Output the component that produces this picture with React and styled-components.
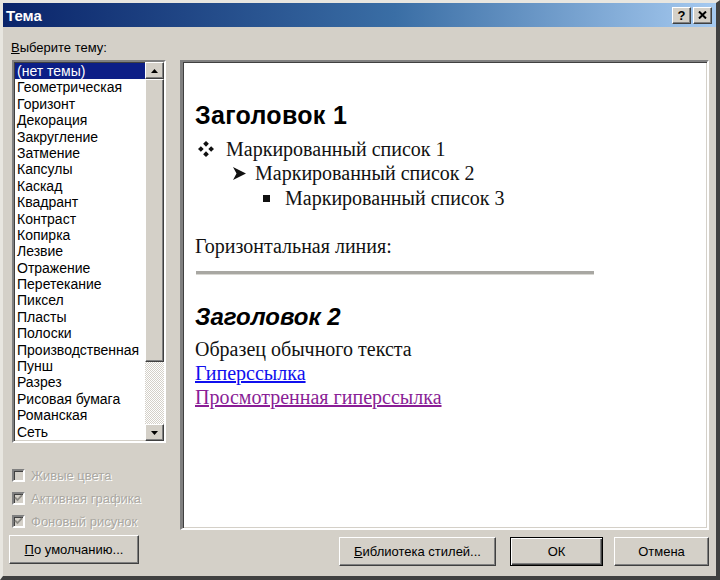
import React from 'react'
import styled, { createGlobalStyle } from 'styled-components'

const GlobalStyle = createGlobalStyle`
  html, body {
    margin: 0;
    padding: 0;
    background: #d4d0c8;
  }
  body {
    font-family: "Liberation Sans", Arial, sans-serif;
  }
`

const raised = `
  border-style: solid;
  border-width: 1px;
  border-color: #ffffff #404040 #404040 #ffffff;
  box-shadow: inset -1px -1px 0 #808080, inset 1px 1px 0 #d4d0c8;
`

const sunken = `
  border-style: solid;
  border-width: 2px;
  border-color: #808080 #ffffff #ffffff #808080;
  box-shadow: inset 1px 1px 0 #404040, inset -1px -1px 0 #d4d0c8;
`

const Window = styled.div`
  width: 720px;
  height: 580px;
  box-sizing: border-box;
  background: #d4d0c8;
  border-style: solid;
  border-width: 3px 4px 4px 3px;
  border-color: #e8e6e0 #404040 #404040 #e8e6e0;
  display: flex;
  flex-direction: column;
`

const TitleBar = styled.div`
  height: 24px;
  flex: none;
  display: flex;
  align-items: center;
  padding: 0 4px 0 3px;
  background: linear-gradient(to right, #0a246a 0%, #3a6ea5 55%, #a6caf0 100%);
  color: #fff;
  font-weight: bold;
  font-size: 15px;
`

const Title = styled.span`
  flex: 1;
`

const CaptionButton = styled.button`
  width: 19px;
  height: 17px;
  padding: 0;
  margin-left: ${({ gap }) => gap || 0}px;
  background: #d4d0c8;
  ${raised}
  display: flex;
  align-items: center;
  justify-content: center;
  font-family: "Liberation Sans", Arial, sans-serif;
  font-weight: bold;
  font-size: 13px;
  color: #000;
`

const Body = styled.div`
  flex: 1;
  display: flex;
  flex-direction: column;
  padding: 13px 7px 6px 6px;
`

const Prompt = styled.div`
  font-size: 13px;
  color: #000;
  padding-left: 2px;
  height: 20px;
  u { text-decoration: underline; }
`

const Columns = styled.div`
  flex: 1;
  display: flex;
  gap: 14px;
`

const LeftCol = styled.div`
  width: 157px;
  display: flex;
  flex-direction: column;
`

const ListBox = styled.div`
  margin-left: 3px;
  height: 383px;
  box-sizing: border-box;
  background: #fff;
  ${sunken}
  display: flex;
`

const Items = styled.ul`
  flex: 1;
  margin: 0;
  padding: 1px 0 0 1px;
  list-style: none;
  overflow: hidden;
`

const Item = styled.li`
  height: 16.4px;
  line-height: 16.4px;
  font-size: 14px;
  padding-left: 2px;
  white-space: nowrap;
  color: ${({ selected }) => (selected ? '#fff' : '#000')};
  background: ${({ selected }) => (selected ? '#0c1e86' : 'transparent')};
`

const ScrollBar = styled.div`
  width: 19px;
  display: flex;
  flex-direction: column;
  background-color: #f2f1ee;
  background-image: repeating-conic-gradient(#d4d0c8 0 25%, #ffffff 0 50%);
  background-size: 2px 2px;
`

const ScrollButton = styled.div`
  height: 17px;
  flex: none;
  box-sizing: border-box;
  background: #d4d0c8;
  ${raised}
  display: flex;
  align-items: center;
  justify-content: center;
`

const Thumb = styled.div`
  height: 283px;
  flex: none;
  box-sizing: border-box;
  background: #d4d0c8;
  ${raised}
`

const Track = styled.div`
  flex: 1;
`

const Checks = styled.div`
  margin: 25px 0 0 3px;
  display: flex;
  flex-direction: column;
  gap: 9px;
`

const CheckRow = styled.label`
  display: flex;
  align-items: center;
  gap: 6px;
  height: 14px;
  font-size: 13px;
  color: #aaa8a2;
  text-shadow: 1px 1px 0 #ffffff;
`

const Box = styled.span`
  width: 13px;
  height: 13px;
  box-sizing: border-box;
  background: #d4d0c8;
  ${sunken}
  display: flex;
  align-items: center;
  justify-content: center;
`

const Button = styled.button`
  height: 29px;
  width: ${({ w }) => w}px;
  margin-right: ${({ after }) => after || 0}px;
  box-sizing: border-box;
  background: #d4d0c8;
  font-family: "Liberation Sans", Arial, sans-serif;
  font-size: 13px;
  color: #000;
  padding: 0;
  ${({ isDefault }) =>
    isDefault
      ? `
    border: 1px solid #000;
    box-shadow: inset 1px 1px 0 #fff, inset -1px -1px 0 #404040, inset -2px -2px 0 #808080;
  `
      : raised}
  u { text-decoration: underline; }
`

const DefaultsButton = styled(Button)`
  margin-top: 7px;
`

const RightCol = styled.div`
  flex: 1;
  display: flex;
  flex-direction: column;
`

const Preview = styled.div`
  height: 470px;
  box-sizing: border-box;
  background: #fff;
  ${sunken}
  border-left-width: 3px;
  padding: 39px 0 0 12px;
  font-family: "Liberation Serif", "Times New Roman", serif;
  font-size: 20px;
  color: #111;
`

const Heading1 = styled.div`
  font-family: "Liberation Sans", Arial, sans-serif;
  font-weight: bold;
  font-size: 25px;
  letter-spacing: 0.3px;
  color: #000;
  height: 36px;
`

const Bullet = styled.div`
  display: flex;
  align-items: center;
  height: 24.5px;
  padding-left: ${({ indent }) => indent}px;
`

const Mark = styled.span`
  width: ${({ w }) => w}px;
  flex: none;
  display: flex;
  align-items: center;
`

const Para = styled.div`
  height: 24px;
  line-height: 24px;
  margin-top: ${({ top }) => top || 0}px;
`

const Rule = styled.div`
  width: 398px;
  height: 3px;
  margin: 13px 0 0 1px;
  background: #a8a7a2;
  border-bottom: 1px solid #d8d7d2;
`

const Heading2 = styled.div`
  margin-top: 24px;
  height: 38px;
  line-height: 36px;
  font-family: "Liberation Sans", Arial, sans-serif;
  font-weight: bold;
  font-style: italic;
  font-size: 24px;
  color: #000;
`

const Link = styled.a`
  display: block;
  height: 24px;
  line-height: 24px;
  width: fit-content;
  color: ${({ visited }) => (visited ? '#8a1e96' : '#1010ee')};
  text-decoration: underline;
`

const Actions = styled.div`
  margin-top: 7px;
  display: flex;
  justify-content: flex-end;
  gap: 11px;
`

const themes = [
  '(нет темы)', 'Геометрическая', 'Горизонт', 'Декорация', 'Закругление', 'Затмение',
  'Капсулы', 'Каскад', 'Квадрант', 'Контраст', 'Копирка', 'Лезвие', 'Отражение',
  'Перетекание', 'Пиксел', 'Пласты', 'Полоски', 'Производственная', 'Пунш', 'Разрез',
  'Рисовая бумага', 'Романская', 'Сеть',
]

const options = [
  { label: 'Живые цвета', checked: false },
  { label: 'Активная графика', checked: true },
  { label: 'Фоновый рисунок', checked: true },
]

const Arrow = ({ down }) => (
  <svg width="7" height="4" viewBox="0 0 7 4">
    <path d={down ? 'M0 0h7L3.5 4z' : 'M3.5 0L7 4H0z'} fill="#000" />
  </svg>
)

const Tick = () => (
  <svg width="9" height="8" viewBox="0 0 9 8">
    <path d="M1 3.5l2.5 2.5L8 1.2" fill="none" stroke="#8c8a84" strokeWidth="1.8" />
  </svg>
)

// four-diamond bullet for the first list level
const Diamonds = () => (
  <svg width="16" height="16" viewBox="0 0 14 14">
    <path d="M7 0l2.5 2.5L7 5 4.5 2.5zM7 9l2.5 2.5L7 14l-2.5-2.5zM2.5 4.5L5 7 2.5 9.5 0 7zM11.5 4.5L14 7l-2.5 2.5L9 7z" fill="#111" />
  </svg>
)

const Chevron = () => (
  <svg width="13" height="13" viewBox="0 0 13 13">
    <path d="M0 0l13 6.5L0 13l3.5-6.5z" fill="#111" />
  </svg>
)

export default function App() {
  return (
    <>
      <GlobalStyle />
      <Window>
        <TitleBar>
          <Title>Тема</Title>
          <CaptionButton>?</CaptionButton>
          <CaptionButton gap={2}>
            <svg width="9" height="8" viewBox="0 0 9 8">
              <path d="M1 0.5l7 7M8 0.5l-7 7" stroke="#000" strokeWidth="2" />
            </svg>
          </CaptionButton>
        </TitleBar>
        <Body>
          <Prompt><u>В</u>ыберите тему:</Prompt>
          <Columns>
            <LeftCol>
              <ListBox>
                <Items>
                  {themes.map((t, i) => (
                    <Item key={t} selected={i === 0}>{t}</Item>
                  ))}
                </Items>
                <ScrollBar>
                  <ScrollButton><Arrow /></ScrollButton>
                  <Thumb />
                  <Track />
                  <ScrollButton><Arrow down /></ScrollButton>
                </ScrollBar>
              </ListBox>
              <Checks>
                {options.map((o) => (
                  <CheckRow key={o.label}>
                    <Box>{o.checked && <Tick />}</Box>
                    {o.label}
                  </CheckRow>
                ))}
              </Checks>
              <DefaultsButton w={130}><u>П</u>о умолчанию...</DefaultsButton>
            </LeftCol>
            <RightCol>
              <Preview>
                <Heading1>Заголовок 1</Heading1>
                <Bullet indent={3}>
                  <Mark w={28}><Diamonds /></Mark>Маркированный список 1
                </Bullet>
                <Bullet indent={38}>
                  <Mark w={22}><Chevron /></Mark>Маркированный список 2
                </Bullet>
                <Bullet indent={68}>
                  <Mark w={22}>
                    <svg width="7" height="7" viewBox="0 0 7 7"><rect width="7" height="7" fill="#111" /></svg>
                  </Mark>
                  Маркированный список 3
                </Bullet>
                <Para top={23}>Горизонтальная линия:</Para>
                <Rule />
                <Heading2>Заголовок 2</Heading2>
                <Para>Образец обычного текста</Para>
                <Link href="#">Гиперссылка</Link>
                <Link href="#" visited>Просмотренная гиперссылка</Link>
              </Preview>
              <Actions>
                <Button w={157} after={3}><u>Б</u>иблиотека стилей...</Button>
                <Button w={93} isDefault>ОК</Button>
                <Button w={95}>Отмена</Button>
              </Actions>
            </RightCol>
          </Columns>
        </Body>
      </Window>
    </>
  )
}
